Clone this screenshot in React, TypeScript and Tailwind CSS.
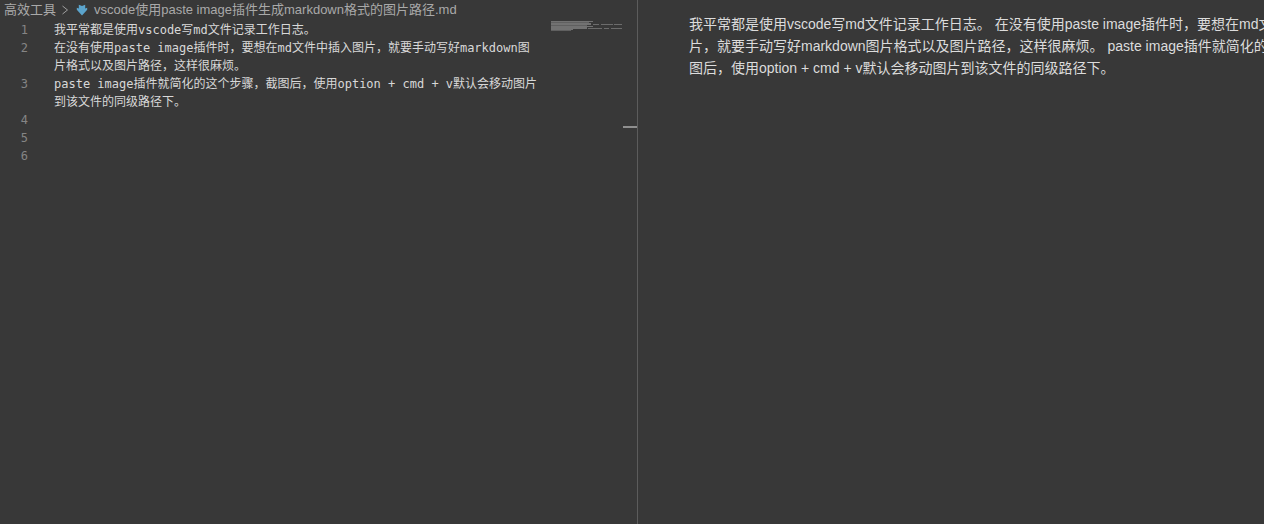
const cjkMono = "font-['DejaVu_Sans_Mono','Noto_Sans_CJK_SC',monospace]";

const lines = [
  { no: 1, text: "我平常都是使用vscode写md文件记录工作日志。" },
  { no: 2, text: "在没有使用paste image插件时，要想在md文件中插入图片，就要手动写好markdown图片格式以及图片路径，这样很麻烦。" },
  { no: 3, text: "paste image插件就简化的这个步骤，截图后，使用option + cmd + v默认会移动图片到该文件的同级路径下。" },
  { no: 4, text: "" },
  { no: 5, text: "" },
  { no: 6, text: "" },
];

const MarkdownIcon = () => (
  <svg width="12" height="12" viewBox="0 0 12 12" className="shrink-0">
    <path d="M2.8 .8 6 2 9.2 .8v3.6l2-.6v2L6 11.4.8 5.8v-2l2 .6z" fill="#5ba4cc" />
  </svg>
);

const Chevron = () => (
  <svg width="8" height="10" viewBox="0 0 8 10" fill="none" className="shrink-0 ml-[5px] mr-[7px]">
    <path d="M1.5 1 6.5 5 1.5 9" stroke="#a0a0a0" strokeWidth="1" />
  </svg>
);

const Minimap = () => (
  <svg width="76" height="12" viewBox="0 0 76 12" className="absolute left-[550px] top-[20px]">
    <g fill="#727272">
      <rect x="1" y="1" width="42" height="1" />
      <rect x="1" y="2" width="38" height="1" fill="#606060" />
      <rect x="1" y="3" width="40" height="2" />
      <rect x="1" y="5" width="36" height="1" fill="#606060" />
      <rect x="1" y="6" width="42" height="1" />
      <rect x="1" y="7" width="36" height="2" />
      <rect x="1" y="9" width="22" height="1" />
      <rect x="1" y="10" width="20" height="1" fill="#606060" />
    </g>
    <g fill="#6c6c6c">
      <rect x="43" y="4" width="6" height="1" />
      <rect x="51" y="4" width="12" height="1" />
      <rect x="64" y="4" width="8" height="1" />
      <rect x="38" y="8" width="14" height="1" />
      <rect x="54" y="8" width="5" height="1" />
      <rect x="61" y="8" width="11" height="1" />
    </g>
  </svg>
);

const Editor = () => (
  <div className="relative w-[638px] h-full shrink-0 border-r border-[#5c5c5c]">
    <div className="flex items-center h-[20px] pl-1 text-[13px] text-[#a9a9a9] whitespace-nowrap font-['Liberation_Sans','Noto_Sans_CJK_SC',sans-serif]">
      <span>高效工具</span>
      <Chevron />
      <MarkdownIcon />
      <span className="ml-[6px]">vscode使用paste image插件生成markdown格式的图片路径.md</span>
    </div>
    <div className={`pt-px text-[12px] leading-[18px] text-[#d8d8d8] ${cjkMono}`}>
      {lines.map((line) => (
        <div key={line.no} className="flex min-h-[18px]">
          <div className="w-[28px] shrink-0 text-right text-[#858585]">{line.no}</div>
          <div className="ml-[26px] w-[484px] break-all">{line.text}</div>
        </div>
      ))}
    </div>
    <Minimap />
    <div className="absolute right-0 top-[126px] w-[14px] h-[2px] bg-[#8f8f8f]" />
  </div>
);

const Preview = () => (
  <div className="flex-1 h-full overflow-hidden pl-[51px] pt-[13px]">
    <p className="whitespace-nowrap text-[14px] leading-[22px] text-[#dcdcdc] font-['Liberation_Sans','Noto_Sans_CJK_SC',sans-serif]">
      我平常都是使用vscode写md文件记录工作日志。 在没有使用paste image插件时，要想在md文件中插入图
      <br />
      片，就要手动写好markdown图片格式以及图片路径，这样很麻烦。 paste image插件就简化的这个步骤，截
      <br />
      图后，使用option + cmd + v默认会移动图片到该文件的同级路径下。
    </p>
  </div>
);

export default function App() {
  return (
    <div className="flex w-[1264px] h-[524px] overflow-hidden bg-[#383838]">
      <Editor />
      <Preview />
    </div>
  );
}
